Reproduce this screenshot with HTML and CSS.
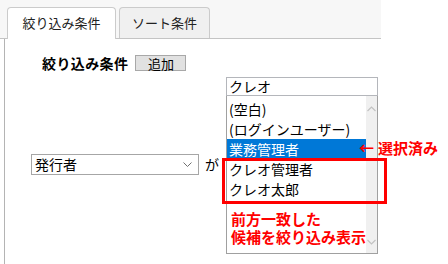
FILE: index.html
```html
<!DOCTYPE html>
<html lang="ja">
<head>
    <meta charset="UTF-8">
    <title>絞り込み条件</title>
    <link rel="stylesheet" href="styles.css">
</head>
<body>
    <div class="tabs">
        <div class="tab active">絞り込み条件</div>
        <div class="tab">ソート条件</div>
    </div>
    <div class="panel">
        <div class="head">
            <span class="head-title">絞り込み条件</span>
            <button class="btn" type="button">追加</button>
        </div>
        <div class="cond">
            <div class="field">
                <div class="select">
                    <span>発行者</span>
                    <svg width="9" height="6" viewBox="0 0 9 6"><path d="M0.5 0.5 L4.5 4.5 L8.5 0.5" fill="none" stroke="#707070" stroke-width="1"/></svg>
                </div>
                <span class="ga">が</span>
            </div>
            <div class="combo">
                <div class="combo-input">クレオ</div>
                <div class="listbox">
                    <ul class="options">
                        <li>(空白)</li>
                        <li>(ログインユーザー)</li>
                        <li class="selected">業務管理者</li>
                        <li>クレオ管理者</li>
                        <li>クレオ太郎</li>
                        <li class="note">前方一致した<br>候補を絞り込み表示</li>
                    </ul>
                    <div class="scrollbar">
                        <svg width="9" height="6" viewBox="0 0 9 6"><path d="M0.5 5 L4.5 1 L8.5 5" fill="none" stroke="#c2c2c2" stroke-width="1.2"/></svg>
                        <svg width="9" height="6" viewBox="0 0 9 6"><path d="M0.5 1 L4.5 5 L8.5 1" fill="none" stroke="#c2c2c2" stroke-width="1.2"/></svg>
                    </div>
                </div>
                <!-- 注釈 -->
                <div class="mark-box"></div>
                <div class="mark-label">←<span>選択済み</span></div>
            </div>
        </div>
    </div>
</body>
</html>
```

FILE: styles.css
```css
body {
    margin: 0;
    width: 448px;
    height: 264px;
    overflow: hidden;
    background: #fff;
    color: #000;
    font-family: "Noto Sans CJK JP", "Noto Sans", sans-serif;
}
.tabs {
    box-sizing: border-box;
    width: 381px;
    height: 39px;
    padding: 7px 0 0 7px;
    display: flex;
    align-items: flex-start;
    background: #f7f7f7;
    border-bottom: 1px solid #c4c4c4;
}
.tab {
    box-sizing: border-box;
    width: 91px;
    height: 31px;
    margin-left: 3px;
    border: 1px solid #cbcbcb;
    border-bottom: none;
    border-radius: 4px 4px 0 0;
    background: #f0f0f0;
    color: #222;
    font-size: 13px;
    line-height: 29px;
    text-align: center;
}
.tab.active {
    width: 109px;
    height: 32px;
    margin-left: 0;
    background: #fff;
    position: relative;
}
.panel {
    box-sizing: border-box;
    height: 225px;
    margin-left: 4px;
    padding-top: 16px;
    border-left: 1px solid #b4b4b4;
}
.head {
    display: flex;
    align-items: center;
    gap: 7px;
    padding-left: 37px;
    height: 16px;
}
.head-title {
    font-size: 14px;
    font-weight: bold;
    line-height: 16px;
    letter-spacing: 0.4px;
}
.btn {
    box-sizing: border-box;
    width: 51px;
    height: 16px;
    padding: 0;
    border: 1px solid #a8a8a8;
    background: #e1e1e1;
    color: #000;
    font-family: inherit;
    font-size: 13px;
    line-height: 13px;
}
.cond {
    display: flex;
    align-items: flex-start;
    margin-top: 6px;
    padding-left: 26px;
}
.field {
    display: flex;
    align-items: center;
    gap: 6px;
    width: 195px;
    margin-top: 77px;
}
.select {
    box-sizing: border-box;
    width: 168px;
    height: 21px;
    padding: 0 6px 0 3px;
    display: flex;
    align-items: center;
    justify-content: space-between;
    border: 1px solid #a6a6a6;
    font-size: 14px;
    line-height: 19px;
}
.ga {
    font-size: 14px;
    line-height: 19px;
}
.combo {
    position: relative;
    width: 152px;
}
.combo-input {
    box-sizing: border-box;
    height: 19px;
    padding-left: 2px;
    border: 1px solid #b4b6bb;
    font-size: 14px;
    line-height: 17px;
}
.listbox {
    box-sizing: border-box;
    height: 158px;
    display: flex;
    border: 1px solid #a0a0a0;
    border-top: none;
}
.options {
    flex: 1;
    list-style: none;
    margin: 0;
    padding: 3px 0 0 0;
}
.options li {
    height: 20px;
    padding-left: 2px;
    font-size: 14px;
    line-height: 20px;
    white-space: nowrap;
}
.options li.selected {
    background: #0078d7;
    color: #fff;
}
.options li.note {
    height: auto;
    margin-top: 11px;
    padding-left: 4px;
    color: #f00;
    font-size: 15px;
    font-weight: bold;
    line-height: 18px;
}
.scrollbar {
    width: 18px;
    display: flex;
    flex-direction: column;
    align-items: center;
    justify-content: space-between;
    padding: 10px 0 8px;
    background: #f0f0f0;
}
.mark-box {
    position: absolute;
    left: -4px;
    top: 81px;
    box-sizing: border-box;
    width: 165px;
    height: 46px;
    border: 3px solid #f00;
}
.mark-label {
    position: absolute;
    left: 133px;
    top: 62px;
    color: #f00;
    font-size: 15px;
    font-weight: bold;
    line-height: 18px;
    white-space: nowrap;
}
.mark-label span {
    margin-left: 4px;
}
```
